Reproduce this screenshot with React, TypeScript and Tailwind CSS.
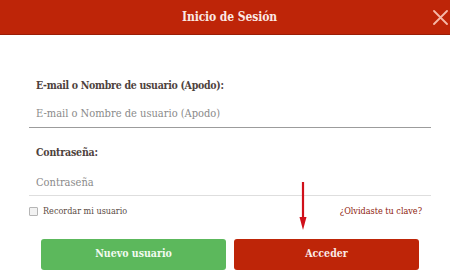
const slab = { fontFamily: '"DejaVu Serif", "Liberation Serif", serif', fontStretch: 'condensed' };

export default function App() {
  return (
    <div className="w-[450px] h-[276px] bg-white overflow-hidden" style={slab}>
      <header className="relative h-[35px] bg-[#be2508] border-b border-[#9a1d06] flex items-center justify-center">
        <h1 className="pl-[9px] text-[12px] font-bold text-[#fbe9e4] tracking-[-0.1px]">Inicio de Sesión</h1>
        <svg className="absolute left-[433px] top-[10px]" width="15" height="15" viewBox="0 0 15 15">
          <path d="M1 1 L14 14 M14 1 L1 14" stroke="#f6b9a8" strokeWidth="1.8" strokeLinecap="round" />
        </svg>
      </header>

      <form className="relative pl-[29px] pr-[19px] pt-[41px]">
        <label className="block pl-[7px] text-[10.5px] font-bold text-[#4e423d] leading-[18px] tracking-[-0.3px]">
          E-mail o Nombre de usuario (Apodo):
        </label>
        <input
          placeholder="E-mail o Nombre de usuario (Apodo)"
          className="mt-[8px] block w-full h-[26px] pl-[7px] pb-[3px] text-[11px] text-[#555] placeholder:text-[#8a8a8a] border-b border-[#9c9c9c] outline-none"
          style={slab}
        />

        <label className="block mt-[15px] pl-[7px] text-[10.5px] font-bold text-[#4e423d] leading-[18px] tracking-[-0.2px]">
          Contraseña:
        </label>
        <input
          type="password"
          placeholder="Contraseña"
          className="mt-[10px] block w-full h-[25px] pl-[7px] pb-[2px] text-[11px] text-[#555] placeholder:text-[#8a8a8a] border-b border-[#dedede] outline-none"
          style={slab}
        />

        <div className="mt-[9px] flex items-center justify-between pr-[9px]">
          <label className="flex items-center gap-[5px] text-[9px] text-[#5a4a44]">
            <span className="w-[9px] h-[9px] border border-[#b5b5b5] bg-[#f2f2f2] rounded-[1px]" />
            Recordar mi usuario
          </label>
          <a className="text-[9px] text-[#8e1a0c]">¿Olvidaste tu clave?</a>
        </div>

        <div className="mt-[20px] flex gap-[8px] pl-[12px] pr-[12px]">
          <button type="button" className="flex-1 h-[31px] rounded-[3px] bg-[#5cb85c] text-[10.5px] font-bold text-[#f2fbf1]" style={slab}>
            Nuevo usuario
          </button>
          <button type="button" className="flex-1 h-[31px] rounded-[3px] bg-[#be2508] text-[10.5px] font-bold text-[#fbeae6]" style={slab}>
            Acceder
          </button>
        </div>

        <svg className="absolute left-[298px] top-[147px]" width="10" height="50" viewBox="0 0 10 50">
          <line x1="5" y1="0" x2="5" y2="36" stroke="#d0101a" strokeWidth="2.2" />
          <polygon points="1.5,35 8.5,35 5,48" fill="#d0101a" />
        </svg>
      </form>
    </div>
  );
}
